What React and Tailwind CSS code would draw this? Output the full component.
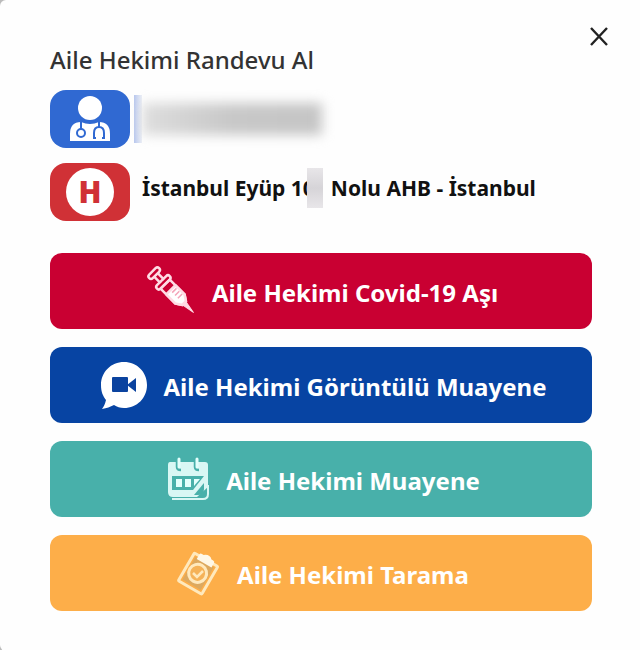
import React from "react";

const SyringeIcon = () => (
  <svg viewBox="0 0 48 48" className="w-12 h-12 overflow-visible" fill="none" aria-hidden="true">
    <g transform="translate(3 3) rotate(45)" stroke="#ffdbe4" strokeWidth="2.5" strokeLinejoin="round">
      <rect x="2" y="-7" width="5" height="14" rx="2.5" />
      <path d="M7 -2.5h9M7 2.5h9" />
      <rect x="15" y="-9" width="5" height="18" rx="2.5" />
      <path d="M20 -6.5h21l6 4v5l-6 4h-21z" />
      <path d="M28 -6.5h13l6 4v5l-6 4h-13z" fill="#fff" />
      <path d="M46 -2.5l14 2.5l-14 2.5z" fill="#ffdbe4" strokeWidth="1" />
      <path d="M31 -5v6M35 -5v6M39 -5v6" stroke="#f4a3b8" strokeWidth="1.5" />
    </g>
  </svg>
);

const VideoIcon = () => (
  <svg viewBox="0 0 48 48" className="w-12 h-12" aria-hidden="true">
    <path
      d="M24 1C11 1 1 11 1 24c0 7 2 11 5 15-1 4-2 6-4 9 5-1 8-2 12-4 3 2 6 3 10 3 13 0 23-10 23-23S37 1 24 1z"
      fill="#fff"
    />
    <rect x="12" y="16" width="16" height="15" rx="1" fill="#0b439f" />
    <path d="M27 24l9-7v14z" fill="#0b439f" />
  </svg>
);

const CalendarIcon = () => (
  <svg viewBox="0 0 44 44" className="w-11 h-11" fill="none" aria-hidden="true">
    <path d="M4 5h35q3 0 3 3v22L31 40H7q-5 0-5-5V8q0-3 2-3z" fill="#d9f7f4" />
    <path d="M6 42h31q5 0 5-5v-9" stroke="#d9f7f4" strokeWidth="2" />
    <path d="M11 4v6q0 3 4 3M29 4v6q0 3 4 3" stroke="#48b0aa" strokeWidth="2.5" />
    <path d="M13 2v8M31 2v8" stroke="#e3fffc" strokeWidth="3" strokeLinecap="round" />
    <path d="M6 19h32L27 33H6z" fill="#48b0aa" />
    <path d="M10 22h6v8h-6zM19 22h6v8h-6z" fill="#e3fffc" />
    <path d="M28 22h6l-6 7z" fill="#e3fffc" />
    <path d="M28 38l10-12v6q0 6-6 6z" fill="#48b0aa" />
  </svg>
);

const ClipboardIcon = () => (
  <svg viewBox="0 0 44 44" className="w-11 h-11 overflow-visible" fill="none" aria-hidden="true">
    <g transform="rotate(30 22 22)">
      <rect x="8" y="7" width="27" height="32" rx="1" stroke="#ffe9bd" strokeWidth="3" />
      <rect x="11" y="10" width="21" height="26" fill="#dda95f" />
      <path d="M13 11V6q0-2 2-2h2q5-4 9 0h2q2 0 2 2v5z" fill="#fff8e8" />
      <circle cx="21" cy="23" r="9" fill="#f5b258" stroke="#ffe9bd" strokeWidth="3" />
    </g>
    <path d="M16 22l4 4 6-6" stroke="#ffe9bd" strokeWidth="2.5" />
  </svg>
);

const DoctorIcon = () => (
  <svg viewBox="0 0 80 58" className="w-full h-full" fill="none" aria-hidden="true">
    <circle cx="40" cy="18" r="12" fill="#fff" />
    <path d="M20 51V44q0-12 11-12 9 4 18 0 11 0 11 12v7z" fill="#fff" />
    <path d="M31 31v8M49 31v6" stroke="#3069d2" strokeWidth="2" />
    <circle cx="31" cy="43" r="4" stroke="#3069d2" strokeWidth="2" />
    <path d="M46 48h-2v-5q0-6 5-6t5 6v5h-2" stroke="#3069d2" strokeWidth="2" />
  </svg>
);

const actions = [
  { label: "Aile Hekimi Covid-19 Aşı", color: "bg-[#c90032]", Icon: SyringeIcon },
  { label: "Aile Hekimi Görüntülü Muayene", color: "bg-[#0744a3]", Icon: VideoIcon },
  { label: "Aile Hekimi Muayene", color: "bg-[#48b0aa]", Icon: CalendarIcon },
  { label: "Aile Hekimi Tarama", color: "bg-[#fdae49]", Icon: ClipboardIcon },
];

const App = () => {
  return (
    <div className="bg-[#bbb] min-h-screen flex flex-col font-['Noto_Sans','Open_Sans',sans-serif]">
      <section className="relative grow bg-[#fefefe] rounded-l-md px-12 pt-11 pb-10">
        <button
          type="button"
          aria-label="Kapat"
          className="absolute top-6 right-7 w-6 h-6 flex items-center justify-center text-[#222]"
        >
          <svg viewBox="0 0 20 20" className="w-5 h-5" stroke="currentColor" strokeWidth="2.4" aria-hidden="true">
            <path d="M1 2l16 17M17 2L1 19" />
          </svg>
        </button>

        <h1 className="pl-0.5 text-2xl leading-8 font-medium text-[#333]">Aile Hekimi Randevu Al</h1>

        <div className="mt-3.5 pl-0.5 flex items-center gap-1">
          <div className="w-20 h-[58px] shrink-0 rounded-2xl bg-[#3069d2]">
            <DoctorIcon />
          </div>
          <div className="flex items-center h-12">
            <div className="w-2 h-12 bg-linear-to-r from-[#b9c8ee] to-[#edf0f7]" />
            <div className="w-[180px] h-8 bg-linear-to-r from-[#dedede] via-[#c8c8c8] to-[#c5c5c5] blur-[6px]" />
          </div>
        </div>

        <div className="mt-[15px] pl-0.5 flex items-center gap-3">
          <div className="w-20 h-[58px] shrink-0 rounded-2xl bg-[#d03136] flex items-center justify-center">
            <span className="w-12 h-12 rounded-full bg-white flex items-center justify-center text-3xl font-black text-[#d03136]">
              H
            </span>
          </div>
          <p className="flex items-center text-[21px] leading-8 font-bold text-[#111] whitespace-nowrap -mt-2">
            <span>İstanbul Eyüp 10</span>
            <span className="relative z-10 -ml-2 mr-2 w-4 h-10 bg-linear-to-b from-[#e8e6e9] via-[#d6d4d8] to-[#e8e6e9]" />
            <span>Nolu AHB - İstanbul</span>
          </p>
        </div>

        <div className="mt-8 pl-0.5 flex flex-col gap-[18px]">
          {actions.map(({ label, color, Icon }) => (
            <button
              key={label}
              type="button"
              className={`w-full h-[76px] pl-1 rounded-xl flex items-center justify-center gap-4 text-white text-2xl font-bold ${color}`}
            >
              <Icon />
              <span className="pt-1">{label}</span>
            </button>
          ))}
        </div>
      </section>
    </div>
  );
};

export default App;
